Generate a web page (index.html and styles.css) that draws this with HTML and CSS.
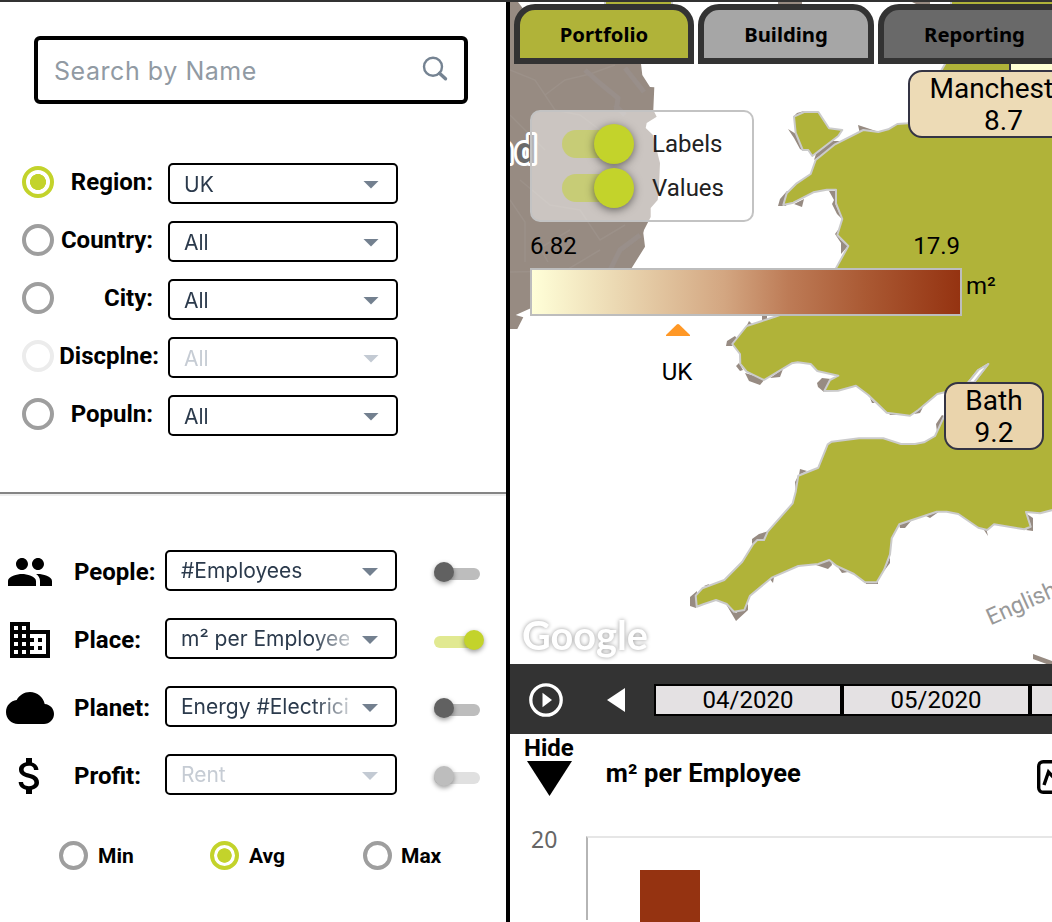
FILE: index.html
```html
<!DOCTYPE html>
<html lang="en">
<head>
<meta charset="utf-8">
<title>Portfolio map</title>
<link rel="stylesheet" href="styles.css">
</head>
<body>
<div class="app">
  <aside class="sidebar">
    <div class="search">
      <span class="search-text">Search by Name</span>
      <svg class="search-icon" width="26" height="26" viewBox="0 0 26 26"><circle cx="11" cy="10.700" r="9" /><path d="M17.500 17.200 L23.500 22.800" class="handle" /></svg>
    </div>
    <div class="filters">
      <div class="filter"><i class="radio on"></i><b class="filter-label">Region:</b><div class="select"><span>UK</span><i class="caret"></i></div></div>
      <div class="filter"><i class="radio"></i><b class="filter-label">Country:</b><div class="select"><span>All</span><i class="caret"></i></div></div>
      <div class="filter"><i class="radio"></i><b class="filter-label">City:</b><div class="select"><span>All</span><i class="caret"></i></div></div>
      <div class="filter"><i class="radio off"></i><b class="filter-label wide">Discplne:</b><div class="select disabled"><span>All</span><i class="caret"></i></div></div>
      <div class="filter"><i class="radio"></i><b class="filter-label">Populn:</b><div class="select"><span>All</span><i class="caret"></i></div></div>
    </div>
    <div class="rule"></div>
    <div class="metrics">
      <div class="metric">
        <svg class="metric-icon" viewBox="0 0 24 24"><path d="M16 11c1.660 0 2.990-1.340 2.990-3S17.660 5 16 5c-1.660 0-3 1.340-3 3s1.340 3 3 3zm-8 0c1.660 0 2.990-1.340 2.990-3S9.660 5 8 5C6.340 5 5 6.340 5 8s1.340 3 3 3zm0 2c-2.330 0-7 1.170-7 3.500V19h14v-2.500c0-2.330-4.670-3.500-7-3.500zm8 0c-.29 0-.62.02-.97.05 1.160.84 1.970 1.970 1.970 3.450V19h6v-2.500c0-2.330-4.670-3.500-7-3.500z"/></svg>
        <b class="metric-label">People:</b><div class="select"><span>#Employees</span><i class="caret"></i></div><i class="switch"></i>
      </div>
      <div class="metric">
        <svg class="metric-icon" viewBox="0 0 24 24"><path d="M12 7V3H2v18h20V7H12zM6 19H4v-2h2v2zm0-4H4v-2h2v2zm0-4H4V9h2v2zm0-4H4V5h2v2zm4 12H8v-2h2v2zm0-4H8v-2h2v2zm0-4H8V9h2v2zm0-4H8V5h2v2zm10 12h-8v-2h2v-2h-2v-2h2v-2h-2V9h8v10zm-2-8h-2v2h2v-2zm0 4h-2v2h2v-2z"/></svg>
        <b class="metric-label">Place:</b><div class="select"><span>m² per Employee</span><i class="caret"></i></div><i class="switch on"></i>
      </div>
      <div class="metric">
        <svg class="metric-icon" viewBox="0 0 24 24"><path d="M19.350 10.040C18.670 6.590 15.640 4 12 4 9.110 4 6.600 5.640 5.350 8.040 2.340 8.360 0 10.910 0 14c0 3.310 2.690 6 6 6h13c2.760 0 5-2.240 5-5 0-2.640-2.050-4.780-4.650-4.960z"/></svg>
        <b class="metric-label">Planet:</b><div class="select"><span>Energy #Electricity</span><i class="caret"></i></div><i class="switch"></i>
      </div>
      <div class="metric">
        <svg class="metric-icon" viewBox="0 0 24 24"><path d="M11.800 10.900c-2.270-.59-3-1.200-3-2.150 0-1.090 1.010-1.850 2.700-1.850 1.780 0 2.440.85 2.500 2.100h2.210c-.07-1.720-1.120-3.300-3.210-3.810V3h-3v2.160c-1.940.42-3.500 1.680-3.500 3.610 0 2.310 1.910 3.460 4.700 4.130 2.500.6 3 1.480 3 2.410 0 .69-.49 1.790-2.700 1.790-2.060 0-2.870-.92-2.980-2.100h-2.200c.12 2.190 1.760 3.420 3.680 3.830V21h3v-2.150c1.950-.37 3.500-1.500 3.500-3.550 0-2.840-2.430-3.810-4.700-4.400z"/></svg>
        <b class="metric-label">Profit:</b><div class="select disabled"><span>Rent</span><i class="caret"></i></div><i class="switch off"></i>
      </div>
    </div>
    <div class="aggregates">
      <div class="aggregate"><i class="radio small"></i><b>Min</b></div>
      <div class="aggregate"><i class="radio small on"></i><b>Avg</b></div>
      <div class="aggregate"><i class="radio small"></i><b>Max</b></div>
    </div>
  </aside>

  <main class="main">
    <section class="map">
      <svg class="map-canvas" width="542" height="662" viewBox="510 2 542 662">
        <g class="rock">
          <path d="M510 2H518L524 10H636L641 64L642.300 75L650 87L654.300 87.300L653.300 110L656.700 116.700L646.700 123L645.700 128L653 135L656.700 150L660 163L659 187L657.700 200L650.700 208V217L644 230L643.300 233L645 246.700L631.700 268L600 300L530.700 308.300L515.700 315L523.300 317.300L517.300 329H510Z"/>
          <path d="M778 2H802V4H778ZM912 2H930V4H916Z"/>
          <path d="M793 117L797 113L804 111V117ZM788 129L796 134L804 151L800 149L794 138ZM858 125L876 131L860 134ZM816 154L832 141H840L830 149L814 160ZM778 206L780 199L787 191L790 191L786 206ZM794 204L804 199L802 207ZM829 191H836L835 203L842 219L837 214L832 204L834 200ZM835 234L841 226L840 239L848 246L841 254V243ZM762 316H767V322H762ZM746 327L749 321L753 325ZM726 346L727 341L735 336L738 340L732 346ZM736 366L739 363L743 370L740 371ZM745 373L765 379L760 385L749 381ZM770 378L783 369L780 377ZM817 383L822 378L831 379L824 392L818 387ZM870 398L875 403L872 403ZM888 412L890 415H899ZM914 414L923 407L920 413ZM936 424L942 415L946 417L937 432ZM800 469L807 471L799 475ZM795 482L798 476L796 492ZM752 544V539L759 534L769 531L764 541H757ZM690 597L697 591L696 608L690 606ZM704 586L709 584L708 587ZM726 604L736 613L748 604V610L736 621ZM769 578L774 577L773 583ZM816 565L831 560L832 565L828 569ZM837 566L848 572L842 573ZM865 580H878V584H866ZM884 571L890 557V563ZM899 524L911 521L905 528H900ZM926 516L940 511L930 518ZM984 530L988 536L986 528ZM1027 514L1033 518V531L1026 530L1031 526Z"/>
          <path d="M1033 654L1052 661V666L1033 659Z"/>
        </g>
        <g class="roads">
          <path d="M510 70L535 80L545 95L565 80L590 74L615 65M545 95L555 110L580 115L600 130M510 115L545 150M510 200L525 222V262M520 180L550 205L580 210L600 240L625 225M510 272L565 271L600 250M548 262L540 248L570 230"/>
          <path class="wide" d="M585 70L602 85L618 98L616 112M625 68L644 92M615 105L625 115M640 235L620 250L610 270"/>
        </g>
        <g class="land">
          <path d="M605 -2H672V10H605Z"/>
          <path d="M794 116.700L804 112H818.300L829 128.300L842.300 130L838.300 136L812.300 156L808.300 150H802.700L795.700 133Z"/>
          <path d="M1060 -4H951V50L945 64L941 71L925 100L908 123.300L897.300 124L888.300 129.300L878.300 132L863.300 130L835 144.300L815.700 160L810.700 174L796.700 183.300L786.700 193.300L783.300 205L793.300 202.700L813.300 192.300L826.700 189.700H836V203.300L842.300 219L837.300 235L848.300 246L836 268.300L820 300L775 316.700L765 320L746.700 326L732.300 344L740 354L740.300 364L746.700 371.700L764 380L791.700 363.300L797.700 362.300L810.700 364L817.300 371L838.300 375.700L830 380L824.300 391L838 390.700L856 385.700L868.300 395L886.700 412.700L910 415.700L918.300 410L937.300 394L946.700 391.700L968.300 382.300L978.300 370L988.300 364L974 382.300L960 400L944 416.700L935 436L924 442.300L915 444H901L883.300 438.300H859L831.700 441.700L827.700 444.300L818.300 467.700L798.300 475.700L795.700 491.700L792.700 503.300L767.700 531.700L764 540H757.300L753.300 544L742.300 561.700L724.300 580L702.300 588.300L695.700 595.700L696.700 606.700L704 604L716 600L726.700 604L734 611.700L744.300 610L750 595.700L771.700 577.700L798.300 566L818.300 564L829.300 560L836.700 566L854 574L865 582.300H876.700L884 570L890 554.300L891.700 538.300L899.300 524.300L936.700 511.700H946.700L958.300 514L978.300 527.700L987.300 530L994 524.300L1024.300 529.300L1030.700 526.700L1026 512L1040 513.300L1060 508Z"/>
          <path class="inlet" d="M968.300 382.300L978.300 370L988.300 364L974 382.300Z"/>
        </g>
        <text class="country" x="539" y="163" text-anchor="end">Ireland</text>
        <text class="sea" transform="translate(990.500 625.500) rotate(-24)">English Channel</text>
        <text class="brand" x="522" y="650" textLength="126" lengthAdjust="spacingAndGlyphs">Google</text>
      </svg>
      <div class="pin back"></div>
      <div class="pin manchester"><span>Manchester</span><span>8.7</span></div>
      <div class="pin bath"><span>Bath</span><span>9.2</span></div>
      <nav class="tabs">
        <div class="tab portfolio">Portfolio</div>
        <div class="tab building">Building</div>
        <div class="tab reporting">Reporting</div>
      </nav>
      <div class="map-controls">
        <div class="toggles">
          <div class="toggle"><i class="big-switch"></i><span>Labels</span></div>
          <div class="toggle"><i class="big-switch"></i><span>Values</span></div>
        </div>
        <div class="legend-values"><span>6.82</span><span>17.9</span></div>
        <div class="legend"><div class="legend-bar"></div><span>m²</span></div>
        <div class="marker">
          <svg width="24" height="12" viewBox="0 0 24 12"><path d="M0 11L10.500 .8Q12 -.6 13.500 .8L24 11V12H0Z" /></svg>
          <span>UK</span>
        </div>
      </div>
    </section>

    <section class="timeline">
      <svg class="play" width="34" height="34" viewBox="0 0 34 34"><circle cx="17" cy="17" r="15.200"/><path d="M13.500 9.700L23 17L13.500 24.300Z"/></svg>
      <svg class="prev" width="18" height="24" viewBox="0 0 18 24"><path d="M0 12L18 0V24Z"/></svg>
      <div class="months"><span>04/2020</span><span>05/2020</span><span>06/2020</span></div>
    </section>

    <section class="chart">
      <div class="chart-head">
        <div class="hide"><b>Hide</b><svg width="45" height="35" viewBox="0 0 45 35"><path d="M0 0H45L22.500 35Z"/></svg></div>
        <b class="chart-title">m² per Employee</b>
        <svg class="chart-type" width="34" height="34" viewBox="0 0 34 34"><rect x="1.700" y="1.700" width="30.600" height="30.600" rx="4.500"/><path d="M7 25L11.500 12L19 20L27 9"/></svg>
      </div>
      <div class="chart-body">
        <span class="tick">20</span>
        <div class="plot"><div class="bar"></div></div>
      </div>
    </section>
  </main>
</div>
</body>
</html>
```
FILE: styles.css
```css
* { box-sizing: border-box; }
body { margin: 0; font-family: Roboto, sans-serif; color: #000; background: #fff; }
i { font-style: normal; flex: none; }

.app { display: flex; width: 1052px; height: 922px; border-top: 2px solid #333; overflow: hidden; }
.sidebar { flex: none; width: 510px; border-right: 4px solid #000; padding-top: 34px; }
.main { flex: none; width: 542px; display: flex; flex-direction: column; }

.search { display: flex; align-items: center; justify-content: space-between; width: 434px; height: 68px; margin-left: 34px; padding: 0 16px 0 16px; border: 4px solid #000; border-radius: 6px; font: 25px Inter, sans-serif; color: #919aa3; }
.search-text { padding-top: 1px; letter-spacing: 0.55px; }
.search-icon { margin-bottom: 2px; fill: none; stroke: #758392; stroke-width: 2.4; }
.search-icon .handle { stroke-width: 3.4; stroke-linecap: round; }

.filters { padding: 49px 0 0 22px; }
.filter { display: flex; align-items: center; height: 58px; font-size: 24px; }
.filter .select { width: 230px; height: 41px; margin: 2px 0 0 15px; padding-right: 17px; }
.filter .select span { padding-top: 2px; }
.filter-label { width: 99px; text-align: right; white-space: nowrap; }
.filter-label.wide { width: 105px; margin-right: -6px; }

.radio { width: 32px; height: 32px; border: 4px solid #9e9e9e; border-radius: 50%; }
.radio.on { border-color: #c3d32b; background: radial-gradient(circle, #c3d32b 0 7.7px, #fff 8.3px); }
.radio.off { border-color: #ececec; }
.radio.small { width: 29px; height: 29px; }
.radio.small.on { background: radial-gradient(circle, #c3d32b 0 6.900px, #fff 7.500px); }

.select { display: flex; align-items: center; justify-content: space-between; width: 232px; height: 41px; padding: 0 17px 0 14px; border: 2px solid #000; border-radius: 5px; font: 21px Inter, sans-serif; color: #2b3a4c; }
.select span { width: 168px; overflow: hidden; white-space: nowrap; -webkit-mask-image: linear-gradient(90deg, #000 132px, transparent 180px); mask-image: linear-gradient(90deg, #000 132px, transparent 180px); }
.caret { width: 16px; height: 8px; margin-top: 3px; background: #73808f; clip-path: polygon(0 0, 100% 0, 50% 100%); }
.select.disabled { color: #c6ccd4; }
.disabled .caret { background: #c3cad3; }

.rule { height: 4px; margin-top: 49px; border-top: 2px solid #858585; border-bottom: 2px solid #eee; }

.metrics { padding: 42px 0 0 6px; }
.metric { display: flex; align-items: center; height: 68px; font-size: 24px; }
.metric-icon { width: 48px; height: 48px; flex: none; }
.metric-label { width: 91px; margin-left: 20px; flex: none; white-space: nowrap; }
.metric .select { flex: none; margin-bottom: 3px; }
.switch { position: relative; width: 46px; height: 12px; margin: 4px 0 0 37px; border-radius: 6px; background: #bdbdbd; }
.switch::before { content: ""; position: absolute; left: 0; top: -6px; width: 20px; height: 20px; border-radius: 50%; background: #616161; box-shadow: 0 2px 5px rgba(0, 0, 0, .4); }
.switch.on { background: #e1e991; }
.switch.on::before { left: 30px; background: #c3d32b; }
.switch.off { background: #e0e0e0; }
.switch.off::before { background: #bdbdbd; }

.aggregates { display: grid; grid-template-columns: 151px 153px 130px; padding: 31px 0 0 59px; font-size: 21px; }
.aggregate { display: flex; align-items: center; gap: 10px; }
.aggregate:last-child { gap: 9px; }

.map { position: relative; height: 662px; overflow: hidden; }
.map-canvas { display: block; }
.rock { fill: #978b82; }
.roads { fill: none; stroke: #9c9189; stroke-width: 1.5; }
.roads .wide { stroke: #998f8a; stroke-width: 5; }
.land { fill: #b0b339; stroke: #cbcbcb; stroke-width: 2; stroke-linejoin: round; }
.land .inlet { fill: #fff; }
.country { font: bold 36px Roboto, sans-serif; letter-spacing: 3px; fill: #6b6b6b; stroke: #fff; stroke-width: 6px; paint-order: stroke; stroke-linejoin: round; }
.sea { font: 23px Roboto, sans-serif; fill: #999; }
.brand { font: bold 41px Lato, sans-serif; fill: #fff; filter: drop-shadow(0 0 2px rgba(0, 0, 0, .4)); }

.pin { position: absolute; display: flex; flex-direction: column; align-items: center; height: 68px; padding-top: 1px; border: 2px solid #343444; border-radius: 14px; background: #eddbb6; font-size: 28px; line-height: 32px; }
.pin.back { left: 499px; top: 10px; width: 120px; border-radius: 0; background: #ffffd4; }
.pin.manchester { left: 398px; top: 68px; width: 191px; }
.pin.bath { left: 434px; top: 380px; width: 100px; background: #ead4ac; }

.tabs { position: absolute; left: 4px; top: 2px; display: flex; gap: 4px; }
.tab { height: 60px; border: 6px solid #333; border-radius: 21px 21px 0 0; font: bold 20.300px/48px "Noto Sans", sans-serif; text-align: center; }
.portfolio { width: 180px; background: #b0b339; }
.building { width: 176px; background: #a6a6a6; }
.reporting { width: 193px; background: #696969; }

.map-controls { position: absolute; left: 20px; top: 108px; width: 480px; font-size: 24px; }
.toggles { display: flex; flex-direction: column; width: 224px; height: 112px; padding: 10px 0 0 30px; border: 2px solid #c3c3c3; border-radius: 10px; background: rgba(255, 255, 255, .5); color: #222; }
.toggle { display: flex; align-items: center; height: 44px; }
.toggle span { margin-left: 32px; }
.big-switch { position: relative; width: 58px; height: 28px; border-radius: 14px; background: rgba(195, 211, 43, .5); }
.big-switch::before { content: ""; position: absolute; left: 32px; top: -6px; width: 40px; height: 40px; border-radius: 50%; background: #c3d32b; box-shadow: 0 2px 8px rgba(0, 0, 0, .5); }
.legend-values { display: flex; justify-content: space-between; width: 430px; padding-top: 10px; line-height: 28px; }
.legend { display: flex; gap: 4px; padding-top: 8px; line-height: 36px; }
.legend-bar { width: 432px; height: 48px; border: 2px solid #bdbdbd; background: linear-gradient(90deg, #ffffd8, #ebd8b2 20%, #d3a681 45%, #bd7b56 60%, #aa5933 78%, #953311); }
.marker { display: flex; flex-direction: column; align-items: center; gap: 22px; width: 40px; margin: 8px 0 0 127px; line-height: 28px; }
.marker svg { margin-left: 1px; fill: #ff9826; }

.timeline { display: flex; align-items: center; height: 70px; padding: 2px 0 0 19px; background: #333; overflow: hidden; }
.play, .prev { flex: none; fill: #fff; }
.play circle { fill: none; stroke: #fff; stroke-width: 3.3; }
.prev { margin-left: 44px; }
.months { display: flex; margin-left: 29px; }
.months span { flex: none; width: 188px; height: 32px; border: 2px solid #000; background: #e4e1e3; font-size: 24px; line-height: 28px; text-align: center; }

.chart { flex: 1; overflow: hidden; }
.chart-head { display: flex; height: 102px; padding-left: 14px; }
.hide { display: flex; flex-direction: column; align-items: center; width: 50px; font-size: 24px; line-height: 28px; }
.hide svg { margin: -1px 0 0 2px; }
.chart-title { width: 431px; padding: 22px 0 0 32px; font-size: 25.500px; line-height: 34px; letter-spacing: 0.1px; flex: none; }
.chart-type { flex: none; margin: 26px 0 0 32px; fill: none; stroke: #000; stroke-width: 3.4; }
.chart-body { display: flex; height: 84px; }
.tick { width: 76px; padding-left: 21px; margin-top: -12px; font: 23px/30px "Noto Sans", sans-serif; color: #666; }
.plot { flex: 1; border-top: 2px solid #e6e6e6; border-left: 2px solid #b5b5b5; padding: 32px 0 0 52px; }
.bar { width: 60px; height: 60px; background: #953311; }
```
